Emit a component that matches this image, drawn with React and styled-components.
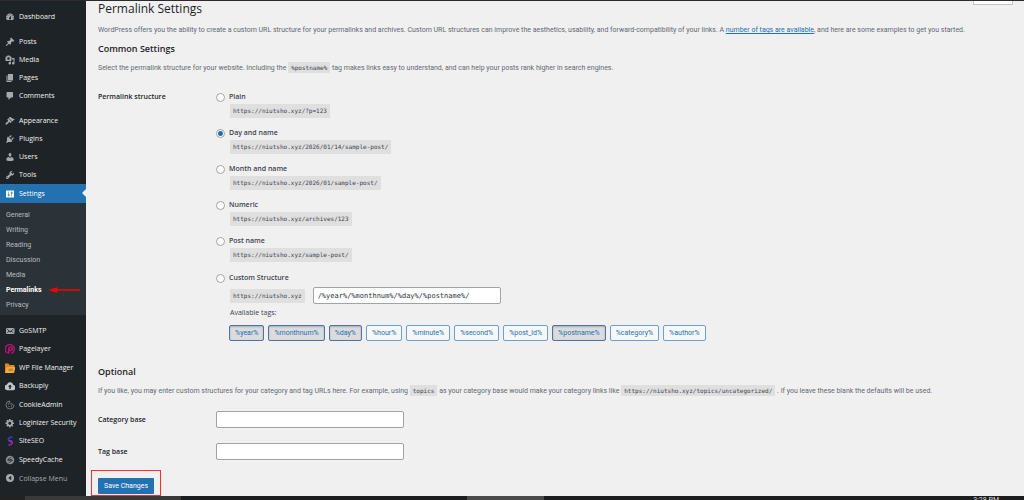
import { useState } from "react";
import styled, { createGlobalStyle, css } from "styled-components";

const GlobalStyle = createGlobalStyle`
  * {
    box-sizing: border-box;
  }
  body {
    margin: 0;
    background: #f0f0f1;
    color: #3c434a;
    font-family: Roboto, "Open Sans", sans-serif;
    font-size: 7px;
    line-height: 14px;
  }
  button,
  input {
    font-family: inherit;
    margin: 0;
  }
`;

const Screen = styled.div`
  display: flex;
  flex-direction: column;
  height: 100vh;
  overflow: hidden;
  border-top: 1px solid #2c2a2d;
`;
const Body = styled.div`
  display: flex;
  flex: 1;
  min-height: 0;
  overflow: hidden;
`;

/* sidebar */
const Sidebar = styled.nav`
  display: flex;
  flex: none;
  flex-direction: column;
  width: 86px;
  padding: 7px 0 9px;
  background: #1d2327;
`;
const MenuList = styled.ul`
  list-style: none;
  margin: 0 0 7px;
  padding: 0;
  &:last-child {
    display: flex;
    flex: 1;
    flex-direction: column;
    justify-content: space-between;
    margin: 0;
  }
`;
const MenuLink = styled.a`
  position: relative;
  display: flex;
  align-items: center;
  gap: 4px;
  height: 18px;
  padding-left: 5px;
  color: #f0f0f1;
  font-family: "Open Sans", "Noto Sans", sans-serif;
  font-size: 7px;
  font-weight: 500;
  text-decoration: none;
  white-space: nowrap;
  ${(p) =>
    p.$current &&
    css`
      height: 19px;
      background: #2271b1;
      color: #fff;
      &::after {
        content: "";
        position: absolute;
        right: 0;
        top: 5px;
        border: 4px solid transparent;
        border-right-color: #f0f0f1;
        border-left-width: 0;
      }
    `}
`;
const MenuIcon = styled.svg`
  flex: none;
  width: 10px;
  height: 10px;
  fill: ${(p) => (p.$current ? "#fff" : "#a7aaad")};
`;
const CollapseButton = styled.button`
  display: flex;
  align-items: center;
  gap: 4px;
  height: 18px;
  padding: 0 0 0 5px;
  border: 0;
  background: none;
  color: #a7aaad;
  font-family: "Open Sans", "Noto Sans", sans-serif;
  font-size: 7px;
`;
const SubMenu = styled.ul`
  list-style: none;
  margin: 0;
  padding: 4px 0 3px;
  background: #2c3338;
`;
const SubLink = styled.a`
  display: flex;
  align-items: center;
  gap: 7px;
  height: 15px;
  padding-left: 6px;
  color: ${(p) => (p.$current ? "#fff" : "#b9bcbf")};
  font-weight: ${(p) => (p.$current ? 700 : 400)};
  text-decoration: none;
`;
const Arrow = styled.svg`
  width: 31px;
  height: 6px;
`;

/* page */
const Page = styled.main`
  position: relative;
  flex: 1;
  min-width: 0;
  padding: 0 12px;
`;
const ScreenOptions = styled.div`
  position: absolute;
  top: 0;
  right: 11px;
  width: 40px;
  height: 4px;
  border: 1px solid #c3c4c7;
  border-top: 0;
  background: #fff;
`;
const Title = styled.h1`
  margin: 0;
  color: #1d2327;
  font-family: "Open Sans", "Noto Sans", sans-serif;
  font-size: 12px;
  font-weight: 400;
  line-height: 16px;
`;
const SectionTitle = styled.h2`
  margin: 0;
  color: #1d2327;
  font-family: "Open Sans", "Noto Sans", sans-serif;
  font-size: 9px;
  font-weight: 600;
  line-height: 14px;
`;
const Text = styled.p`
  margin: ${(p) => p.$margin || "0"};
  color: #646970;
  white-space: nowrap;
  a {
    color: #2271b1;
  }
`;
const Code = styled.code`
  padding: 2px 3px;
  background: #dfdfe0;
  color: #3c434a;
  font-family: "DejaVu Sans Mono", monospace;
  font-size: 6px;
`;
const FormRow = styled.div`
  display: grid;
  grid-template-columns: 118px 1fr;
  align-items: ${(p) => (p.$center ? "center" : "start")};
  margin-bottom: ${(p) => (p.$center ? "15px" : "24px")};
`;
const Heading = styled.label`
  color: #1d2327;
  font-family: "Open Sans", "Noto Sans", sans-serif;
  font-weight: 600;
`;
const Options = styled.div`
  display: flex;
  flex-direction: column;
  gap: 8px;
`;
const CustomOption = styled.div`
  padding-top: 1px;
`;
const RadioLabel = styled.label`
  display: flex;
  align-items: center;
  gap: 4px;
  font-family: "Open Sans", "Noto Sans", sans-serif;
  font-weight: 600;
`;
const Radio = styled.input`
  appearance: none;
  width: 9px;
  height: 9px;
  border: 1px solid #a0a3a7;
  border-radius: 50%;
  background: #fff;
  &:checked {
    background: radial-gradient(circle, #2271b1 2px, #fff 3px);
  }
`;
const Indent = styled.div`
  display: flex;
  align-items: center;
  gap: 8px;
  padding-left: 14px;
  line-height: 10px;
  height: ${(p) => (p.$tall ? "21px" : "14px")};
`;
const AvailableLabel = styled(Indent)`
  font-family: "Open Sans", "Noto Sans", sans-serif;
`;
const TextField = styled.input`
  width: 188px;
  height: 17px;
  padding: 0 4px;
  border: 1px solid #a0a3a7;
  border-radius: 2px;
  background: #fff;
  color: #2c3338;
  font-size: 7px;
  ${(p) =>
    p.$code &&
    css`
      font-family: "DejaVu Sans Mono", monospace;
    `}
`;
const TagList = styled.div`
  display: flex;
  flex-wrap: wrap;
  gap: 4px;
  padding: 5px 0 0 13px;
`;
const TagButton = styled.button`
  height: 16px;
  padding: 0 5px;
  border: 1px solid ${(p) => (p.$active ? "#50749a" : "#6f9fcb")};
  border-radius: 2px;
  background: ${(p) => (p.$active ? "#dcdcde" : "#f6f7f7")};
  box-shadow: ${(p) => (p.$active ? "inset 0 1px 2px #a3adb8" : "none")};
  color: #2271b1;
  font-size: 7px;
`;
const SubmitFrame = styled.div`
  width: fit-content;
  margin: -5px 0 0 -7px;
  padding: 7px 6px 1px;
  border: 1px solid #fb2c30;
`;
const SubmitButton = styled.button`
  display: block;
  height: 16px;
  padding: 0 6px;
  border: 0;
  border-radius: 1px;
  background: #2271b1;
  color: #fff;
  font-size: 7px;
`;

/* desktop task bar under the browser */
const Taskbar = styled.footer`
  display: flex;
  flex: none;
  justify-content: space-between;
  height: 4px;
  overflow: hidden;
  background: linear-gradient(90deg, #222 25px, #393939 25px 181px, #1b1d1f 181px);
  color: #ddd;
  font-size: 7px;
  line-height: 7px;
`;
const TaskbarItem = styled.span`
  width: 77px;
  margin-left: 467px;
  background: #4a4a4a;
`;
const Clock = styled.time`
  padding: 1px 25px 0 0;
`;

const ICONS = {
  dashboard:
    "M3.76 16h12.48c1.1-1.37 1.76-3.11 1.76-5 0-4.42-3.58-8-8-8s-8 3.58-8 8c0 1.89.66 3.63 1.76 5zM10 4c.55 0 1 .45 1 1s-.45 1-1 1-1-.45-1-1 .45-1 1-1zM6 6c.55 0 1 .45 1 1s-.45 1-1 1-1-.45-1-1 .45-1 1-1zm8 0c.55 0 1 .45 1 1s-.45 1-1 1-1-.45-1-1 .45-1 1-1zm-5.37 5.55L12 7v6c0 1.1-.9 2-2 2s-2-.9-2-2c0-.57.24-1.08.63-1.45zM4 10c.55 0 1 .45 1 1s-.45 1-1 1-1-.45-1-1 .45-1 1-1zm12 0c.55 0 1 .45 1 1s-.45 1-1 1-1-.45-1-1 .45-1 1-1z",
  post: "M10.44 3.02l1.82-1.82 6.36 6.35-1.83 1.82c-1.05-.68-2.48-.57-3.41.36l-.75.75c-.92.93-1.04 2.35-.35 3.41l-1.83 1.82-2.41-2.41-2.8 2.79c-.42.42-3.38 2.71-3.8 2.29s1.86-3.39 2.28-3.81l2.79-2.79L4.1 9.36l1.83-1.82c1.05.69 2.48.57 3.4-.36l.75-.75c.93-.92 1.05-2.35.36-3.41z",
  media:
    "M13 11V4c0-.55-.45-1-1-1h-1.67L9 1H5L3.67 3H2c-.55 0-1 .45-1 1v7c0 .55.45 1 1 1h10c.55 0 1-.45 1-1zM7 4.5c1.38 0 2.5 1.12 2.5 2.5S8.38 9.5 7 9.5 4.5 8.38 4.5 7 5.62 4.5 7 4.5zM14 6h5v10.5c0 1.38-1.12 2.5-2.5 2.5S14 17.88 14 16.5s1.12-2.5 2.5-2.5c.17 0 .34.02.5.05V9h-3V6zm-4 8.05V13h2v3.5c0 1.38-1.12 2.5-2.5 2.5S7 17.88 7 16.5 8.12 14 9.5 14c.17 0 .34.02.5.05z",
  page: "M6 15V2h10v13H6zm-1 1h8v2H3V5h2v11z",
  comments:
    "M5 2h9c1.1 0 2 .9 2 2v7c0 1.1-.9 2-2 2h-2l-5 5v-5H5c-1.1 0-2-.9-2-2V4c0-1.1.9-2 2-2z",
  appearance:
    "M14.48 11.06L7.41 3.99l1.5-1.5c.5-.56 2.3-.47 3.51.32 1.21.8 1.43 1.28 2.91 2.1 1.18.64 2.45 1.26 4.45.85zm-.71.71L6.7 4.7 4.93 6.47c-.39.39-.39 1.02 0 1.41l1.06 1.06c.39.39.39 1.03 0 1.42-.6.6-1.43 1.11-2.21 1.69-.35.26-.7.53-1.01.84C1.43 14.23.4 16.08 1.4 17.07c.99 1 2.84-.03 4.18-1.36.31-.31.58-.66.85-1.02.57-.78 1.08-1.61 1.69-2.21.39-.39 1.02-.39 1.41 0l1.06 1.06c.39.39 1.02.39 1.41 0z",
  plugins:
    "M13.11 4.36L9.87 7.6 8 5.73l3.24-3.24c.35-.34 1.05-.2 1.56.32.52.51.66 1.21.31 1.55zm-8 1.77l.91-1.12 9.01 9.01-1.19.84c-.71.71-2.63 1.16-3.82 1.16H6.14L4.9 17.26c-.59.59-1.54.59-2.12 0-.59-.58-.59-1.53 0-2.12l1.24-1.24v-3.88c0-1.13.4-3.19 1.09-3.89zm7.26 3.97l3.24-3.24c.34-.35 1.04-.21 1.55.31.52.51.66 1.21.31 1.55l-3.24 3.25z",
  users:
    "M10 9.25c-2.27 0-2.73-3.44-2.73-3.44C7 4.02 7.82 2 9.97 2c2.16 0 2.98 2.02 2.71 3.81 0 0-.41 3.44-2.68 3.44zm0 2.57L12.72 10c2.39 0 4.52 2.33 4.52 4.53v2.49s-3.65 1.13-7.24 1.13c-3.65 0-7.24-1.13-7.24-1.13v-2.49c0-2.25 1.94-4.48 4.47-4.48z",
  tools:
    "M16.68 9.77c-1.34 1.34-3.3 1.67-4.95.99l-5.41 6.52c-.99.99-2.59.99-3.58 0s-.99-2.59 0-3.57l6.52-5.42c-.68-1.65-.35-3.61.99-4.95 1.28-1.28 3.12-1.62 4.72-1.06l-2.89 2.89 2.82 2.82 2.86-2.87c.53 1.58.18 3.39-1.08 4.65zM3.81 16.21c.4.39 1.04.39 1.43 0 .4-.4.4-1.04 0-1.43-.39-.4-1.03-.4-1.43 0-.39.39-.39 1.03 0 1.43z",
  settings:
    "M18 16V4c0-.55-.45-1-1-1H3c-.55 0-1 .45-1 1v12c0 .55.45 1 1 1h14c.55 0 1-.45 1-1zM8 11h1c.55 0 1 .45 1 1s-.45 1-1 1H8v1.5c0 .28-.22.5-.5.5s-.5-.22-.5-.5V13H6c-.55 0-1-.45-1-1s.45-1 1-1h1V5.5c0-.28.22-.5.5-.5s.5.22.5.5V11zm5-2h-1c-.55 0-1-.45-1-1s.45-1 1-1h1V5.5c0-.28.22-.5.5-.5s.5.22.5.5V7h1c.55 0 1 .45 1 1s-.45 1-1 1h-1v5.5c0 .28-.22.5-.5.5s-.5-.22-.5-.5V9z",
  email:
    "M19 14.5v-9c0-.83-.67-1.5-1.5-1.5H3.49c-.83 0-1.5.67-1.5 1.5v9c0 .83.67 1.5 1.5 1.5H17.5c.83 0 1.5-.67 1.5-1.5zm-1.31-9.11c.33.33.15.67-.03.84L13.6 9.95l3.9 4.06c.12.14.2.36.06.51-.13.16-.43.15-.56.05l-4.37-3.73-2.14 1.95-2.13-1.95-4.37 3.73c-.13.1-.43.11-.56-.05-.14-.15-.06-.37.06-.51l3.9-4.06-4.06-3.72c-.18-.17-.36-.51-.03-.84s.67-.17.95.07l6.24 5.04 6.25-5.04c.28-.24.62-.4.95-.07z",
  gear: "M18 12h-2.18c-.17.7-.44 1.35-.81 1.93l1.54 1.54-2.1 2.1-1.54-1.54c-.58.36-1.23.63-1.91.79V19H8v-2.18c-.68-.16-1.33-.43-1.91-.79l-1.54 1.54-2.12-2.12 1.54-1.54c-.36-.58-.63-1.23-.79-1.91H1V9.03h2.17c.16-.7.44-1.35.8-1.94L2.43 5.55l2.1-2.1 1.54 1.54c.58-.37 1.24-.64 1.93-.81V2h3v2.18c.68.16 1.33.43 1.91.79l1.54-1.54 2.12 2.12-1.54 1.54c.36.59.64 1.24.8 1.94H18V12zm-8.5 1.5c1.66 0 3-1.34 3-3s-1.34-3-3-3-3 1.34-3 3 1.34 3 3 3z",
};

const PLUGIN_ART = {
  pagelayer: (
    <g fill="none" stroke="#b5126e">
      <path d="M5 18A9 9 0 1 1 13 18.5" strokeWidth="3" />
      <circle cx="11" cy="9.5" r="3.5" strokeWidth="3" />
      <path d="M7.5 9.500v10" strokeWidth="3" />
    </g>
  ),
  folder: (
    <>
      <path d="M-1 1h8l2 3h10v5H3l-3 10z" fill="#d98a1b" />
      <path d="M3 8h18l-3 12H-1z" fill="#f7a935" />
      <path d="M8 11h8v5H6z" fill="#c98536" />
    </>
  ),
  cloud: (
    <>
      <path d="M16.500 8a6.500 6.500 0 0 0-12.500-1A5.800 5.800 0 0 0 4.500 18.500h11.500A5.300 5.300 0 0 0 16.500 8z" fill="#c3c6c9" />
      <path d="M10 7l4 4.500h-2.500V16h-3v-4.500H6z" fill="#1d2327" />
    </>
  ),
  cookie: (
    <g fill="none" stroke="#888c90" strokeWidth="1.500">
      <path d="M10 2a8 8 0 1 0 8 8 3 3 0 0 1-4-3 3 3 0 0 1-4-5z" />
      <path d="M6 8h2M7 13h2M12 12h2M12 16h1" strokeWidth="2" />
    </g>
  ),
  siteseo: (
    <g fill="none" strokeWidth="3" strokeLinecap="round">
      <path d="M14 2C8 3 5 6 7 9c1 1 3 2 5 3" stroke="#3a3fb5" />
      <path d="M9 9c5 1 7 3 5 6-1 2-4 3-6 3" stroke="#9a28b5" />
    </g>
  ),
  speedy: (
    <>
      <circle cx="10" cy="10" r="8.500" fill="#8c9094" />
      <path d="M13 4L5 9l5 1-5 2M7 16l8-5-5-1 5-2" fill="none" stroke="#1d2327" strokeWidth="1.500" />
    </>
  ),
  collapse: (
    <>
      <circle cx="10" cy="10" r="8" />
      <path d="M12.500 5.500v9L6.500 10z" fill="#1d2327" />
    </>
  ),
};

const MENU = [
  [["Dashboard", "dashboard"]],
  [
    ["Posts", "post"],
    ["Media", "media"],
    ["Pages", "page"],
    ["Comments", "comments"],
  ],
  [
    ["Appearance", "appearance"],
    ["Plugins", "plugins"],
    ["Users", "users"],
    ["Tools", "tools"],
    ["Settings", "settings"],
  ],
  [
    ["GoSMTP", "email"],
    ["Pagelayer", "pagelayer"],
    ["WP File Manager", "folder"],
    ["Backuply", "cloud"],
    ["CookieAdmin", "cookie"],
    ["Loginizer Security", "gear"],
    ["SiteSEO", "siteseo"],
    ["SpeedyCache", "speedy"],
  ],
];

const SUBMENU = ["General", "Writing", "Reading", "Discussion", "Media", "Permalinks", "Privacy"];

const STRUCTURES = [
  ["Plain", "https://niutsho.xyz/?p=123"],
  ["Day and name", "https://niutsho.xyz/2026/01/14/sample-post/"],
  ["Month and name", "https://niutsho.xyz/2026/01/sample-post/"],
  ["Numeric", "https://niutsho.xyz/archives/123"],
  ["Post name", "https://niutsho.xyz/sample-post/"],
];

const TAGS = [
  "%year%",
  "%monthnum%",
  "%day%",
  "%hour%",
  "%minute%",
  "%second%",
  "%post_id%",
  "%postname%",
  "%category%",
  "%author%",
];

const Icon = ({ name, current }) => (
  <MenuIcon viewBox="0 0 20 20" $current={current} aria-hidden="true">
    {PLUGIN_ART[name] || <path d={ICONS[name]} />}
  </MenuIcon>
);

const SettingsSubMenu = () => (
  <SubMenu>
    {SUBMENU.map((name) => (
      <li key={name}>
        <SubLink href="#" $current={name === "Permalinks"}>
          {name}
          {name === "Permalinks" && (
            <Arrow viewBox="0 0 31 6" aria-hidden="true">
              <path d="M0 3l8-2.500v2h23v1H8v2z" fill="#f00" stroke="#f00" strokeWidth=".5" />
            </Arrow>
          )}
        </SubLink>
      </li>
    ))}
  </SubMenu>
);

const AdminMenu = () => (
  <Sidebar>
    {MENU.map((group, i) => (
      <MenuList key={i}>
        {group.map(([name, icon]) => (
          <li key={name}>
            <MenuLink href="#" $current={name === "Settings"}>
              <Icon name={icon} current={name === "Settings"} />
              {name}
            </MenuLink>
            {name === "Settings" && <SettingsSubMenu />}
          </li>
        ))}
        {i === MENU.length - 1 && (
          <li>
            <CollapseButton type="button">
              <Icon name="collapse" />
              Collapse Menu
            </CollapseButton>
          </li>
        )}
      </MenuList>
    ))}
  </Sidebar>
);

const App = () => {
  const [selected, setSelected] = useState("Day and name");
  const [structure, setStructure] = useState("/%year%/%monthnum%/%day%/%postname%/");

  const toggleTag = (tag) =>
    setStructure((s) => (s.includes(tag) ? s.replace(`${tag}/`, "") : `${s}${tag}/`));

  return (
    <Screen>
      <GlobalStyle />
      <Body>
        <AdminMenu />
        <Page>
          <ScreenOptions />
          <Title>Permalink Settings</Title>
          <Text $margin="6px 0 5px">
            WordPress offers you the ability to create a custom URL structure for your permalinks and
            archives. Custom URL structures can improve the aesthetics, usability, and
            forward-compatibility of your links. A <a href="#">number of tags are available</a>, and
            here are some examples to get you started.
          </Text>
          <SectionTitle>Common Settings</SectionTitle>
          <Text $margin="5px 0 15px">
            Select the permalink structure for your website. Including the <Code>%postname%</Code> tag
            makes links easy to understand, and can help your posts rank higher in search engines.
          </Text>

          <FormRow>
            <Heading as="div" id="structure-heading">
              Permalink structure
            </Heading>
            <Options role="radiogroup" aria-labelledby="structure-heading">
              {STRUCTURES.map(([name, url]) => (
                <div key={name}>
                  <RadioLabel>
                    <Radio
                      type="radio"
                      name="structure"
                      checked={selected === name}
                      onChange={() => setSelected(name)}
                    />
                    {name}
                  </RadioLabel>
                  <Indent>
                    <Code>{url}</Code>
                  </Indent>
                </div>
              ))}
              <CustomOption>
                <RadioLabel>
                  <Radio
                    type="radio"
                    name="structure"
                    checked={selected === "Custom Structure"}
                    onChange={() => setSelected("Custom Structure")}
                  />
                  Custom Structure
                </RadioLabel>
                <Indent $tall>
                  <Code>https://niutsho.xyz</Code>
                  <TextField
                    $code
                    aria-label="Custom Structure"
                    value={structure}
                    onChange={(e) => setStructure(e.target.value)}
                  />
                </Indent>
                <AvailableLabel>Available tags:</AvailableLabel>
                <TagList>
                  {TAGS.map((tag) => (
                    <TagButton
                      key={tag}
                      type="button"
                      $active={structure.includes(tag)}
                      onClick={() => toggleTag(tag)}
                    >
                      {tag}
                    </TagButton>
                  ))}
                </TagList>
              </CustomOption>
            </Options>
          </FormRow>

          <SectionTitle>Optional</SectionTitle>
          <Text $margin="5px 0 13px">
            If you like, you may enter custom structures for your category and tag URLs here. For
            example, using <Code>topics</Code> as your category base would make your category links
            like <Code>https://niutsho.xyz/topics/uncategorized/</Code> . If you leave these blank the
            defaults will be used.
          </Text>
          <FormRow $center>
            <Heading htmlFor="category-base">Category base</Heading>
            <TextField id="category-base" />
          </FormRow>
          <FormRow $center>
            <Heading htmlFor="tag-base">Tag base</Heading>
            <TextField id="tag-base" />
          </FormRow>
          <SubmitFrame>
            <SubmitButton type="button">Save Changes</SubmitButton>
          </SubmitFrame>
        </Page>
      </Body>
      <Taskbar>
        <TaskbarItem />
        <Clock>3:28 PM</Clock>
      </Taskbar>
    </Screen>
  );
};

export default App;
